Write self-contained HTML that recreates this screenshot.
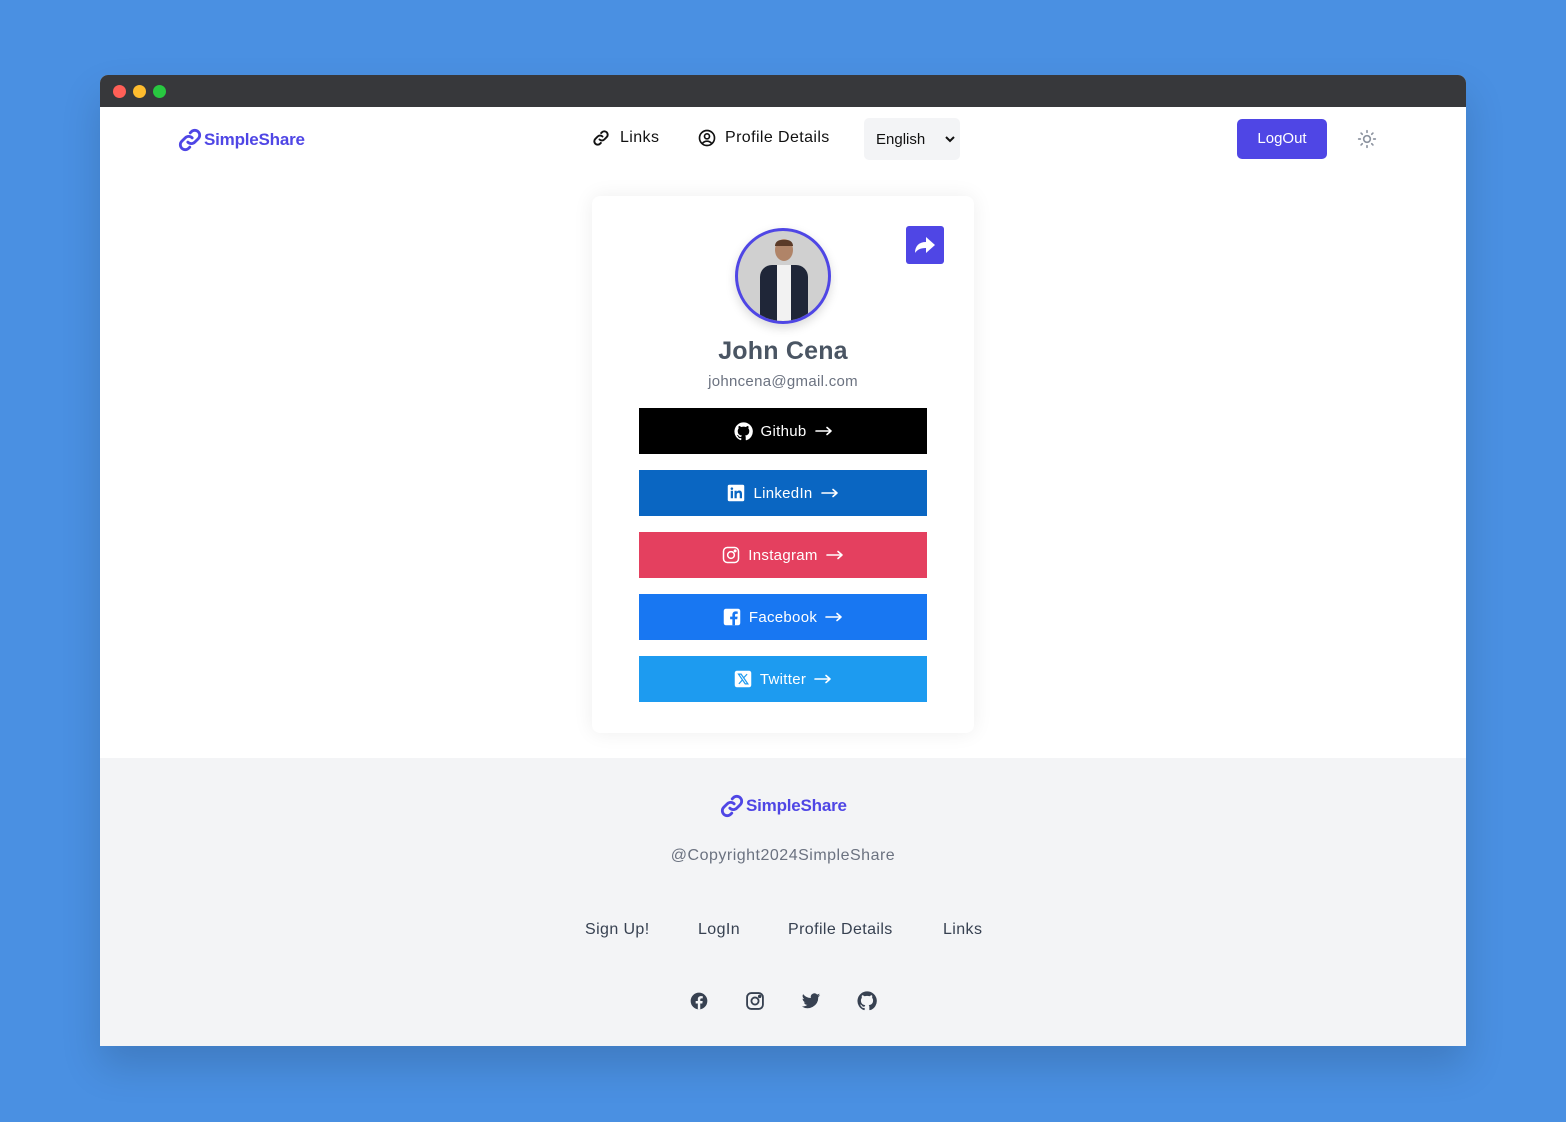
<!DOCTYPE html>
<html><head><meta charset="utf-8"><style>
*{box-sizing:border-box;margin:0;padding:0}
body{width:1566px;height:1122px;background:#4a90e2;font-family:"Liberation Sans",sans-serif;position:relative;overflow:hidden}
.win{position:absolute;left:100px;top:75px;width:1366px;height:971px;background:#fff;border-radius:8px 8px 0 0;overflow:hidden;box-shadow:0 20px 40px rgba(0,0,0,.15)}
.bar{height:32px;background:#37383b;position:relative}
.dot{position:absolute;top:10px;width:13px;height:13px;border-radius:50%}
.abs{position:absolute}
.logo{color:#4f46e5;font-weight:bold;font-size:17px;display:flex;align-items:center;gap:1px;letter-spacing:-.2px}
.nav{font-size:16px;color:#111;display:flex;align-items:center;gap:8px;letter-spacing:.4px}
.card{left:492px;top:121px;width:382px;height:537px;border-radius:8px;box-shadow:0 0 20px rgba(0,0,0,.07);background:#fff}
.btn{position:absolute;left:47px;width:288px;height:46px;color:#fff;font-size:15px;display:flex;align-items:center;justify-content:center;gap:8px;letter-spacing:.3px}
.foot{left:0;top:683px;width:1366px;height:288px;background:#f3f4f6}
.fl{font-size:16px;color:#374151;position:absolute;top:163px;letter-spacing:.4px}
</style></head><body>
<svg width="0" height="0" style="position:absolute"><defs>
<symbol id="ar" viewBox="0 0 18 10"><path d="M1 5h15M12 1.5L16 5l-4 3.5" stroke="#fff" stroke-width="1.6" fill="none" stroke-linecap="round" stroke-linejoin="round"/></symbol>
<symbol id="lk" viewBox="0 0 24 24"><path d="M10 14a4.5 4.5 0 0 0 6.4 0l3.2-3.2a4.5 4.5 0 0 0-6.4-6.4l-1 1" fill="none" stroke="currentColor" stroke-width="2.6" stroke-linecap="round"/><path d="M14 10a4.5 4.5 0 0 0-6.4 0l-3.2 3.2a4.5 4.5 0 0 0 6.4 6.4l1-1" fill="none" stroke="currentColor" stroke-width="2.6" stroke-linecap="round"/></symbol>
</defs></svg>
<div class="win">
 <div class="bar"><div class="dot" style="left:13px;background:#ff5f57"></div><div class="dot" style="left:33px;background:#febc2e"></div><div class="dot" style="left:53px;background:#28c840"></div></div>
 <div class="abs logo" style="left:77px;top:52px"><svg width="26" height="26" style="color:#4f46e5"><use href="#lk"/></svg>SimpleShare</div>
 <div class="abs nav" style="left:492px;top:54px"><svg width="18" height="18" style="color:#111"><use href="#lk"/></svg><span style="margin-left:2px">Links</span></div>
 <div class="abs nav" style="left:597px;top:53px"><svg width="20" height="20" viewBox="0 0 24 24" fill="none" stroke="#111" stroke-width="2"><circle cx="12" cy="12" r="9"/><circle cx="12" cy="10" r="3"/><path d="M6.5 18.5a7 7 0 0 1 11 0"/></svg>Profile Details</div>
 <div class="abs" style="left:764px;top:43px;width:96px;height:42px;background:#f3f4f6;border-radius:5px;font-size:15px;color:#111;padding:13px 0 0 12px">English<svg style="position:absolute;right:5px;top:17px" width="10" height="8" viewBox="0 0 10 8"><path d="M1 2l4 4 4-4" stroke="#111" stroke-width="2" fill="none"/></svg></div>
 <div class="abs" style="left:1137px;top:44px;width:90px;height:40px;background:#4f46e5;border-radius:5px;color:#fff;font-size:15px;text-align:center;line-height:40px">LogOut</div>
 <svg class="abs" style="left:1257px;top:54px" width="20" height="20" viewBox="0 0 24 24" fill="none" stroke="#8d94a0" stroke-width="2" stroke-linecap="round"><circle cx="12" cy="12" r="4"/><path d="M12 2v2M12 20v2M2 12h2M20 12h2M4.9 4.9l1.4 1.4M17.7 17.7l1.4 1.4M4.9 19.1l1.4-1.4M17.7 6.3l1.4-1.4"/></svg>
 <div class="abs card">
  <div class="abs" style="left:143px;top:32px;width:96px;height:96px;border-radius:50%;border:3px solid #4f46e5;background:#d0d0d0;overflow:hidden;box-shadow:0 4px 10px rgba(0,0,0,.15)">
   <div class="abs" style="left:37px;top:8px;width:18px;height:22px;border-radius:50%;background:#b08468"></div>
   <div class="abs" style="left:37px;top:9px;width:18px;height:6px;border-radius:8px 8px 0 0;background:#5a3a28"></div>
   <div class="abs" style="left:22px;top:34px;width:48px;height:60px;background:#1f2638;border-radius:12px 12px 0 0"></div>
   <div class="abs" style="left:39px;top:34px;width:14px;height:60px;background:#f2f2f2"></div>
  </div>
  <div class="abs" style="left:314px;top:30px;width:38px;height:38px;background:#4f46e5;border-radius:3px"><svg width="38" height="38" viewBox="0 0 38 38"><path d="M20 11l9 8-9 8v-5c-6 0-9 2-11 5 0-7 4-11 11-11z" fill="#fff"/></svg></div>
  <div class="abs" style="left:0;top:141px;width:382px;text-align:center;font-size:25px;color:#4a5563;font-weight:600;letter-spacing:.2px">John Cena</div>
  <div class="abs" style="left:0;top:177px;width:382px;text-align:center;font-size:15px;color:#6b7280;letter-spacing:.3px">johncena@gmail.com</div>
  <div class="btn" style="top:212px;background:#000"><svg width="19" height="19" viewBox="0 0 24 24" fill="#fff"><path d="M12 .5a11.5 11.5 0 0 0-3.6 22.4c.6.1.8-.3.8-.6v-2c-3.2.7-3.9-1.5-3.9-1.5-.5-1.3-1.3-1.7-1.3-1.7-1-.7.1-.7.1-.7 1.2.1 1.8 1.2 1.8 1.2 1 1.8 2.7 1.3 3.4 1 .1-.8.4-1.3.7-1.6-2.6-.3-5.3-1.3-5.3-5.7 0-1.3.5-2.3 1.2-3.1-.1-.3-.5-1.5.1-3.1 0 0 1-.3 3.2 1.2a11 11 0 0 1 5.8 0C17 4.8 18 5.1 18 5.1c.6 1.6.2 2.8.1 3.1.8.8 1.2 1.8 1.2 3.1 0 4.4-2.7 5.4-5.3 5.7.4.4.8 1.1.8 2.2v3.2c0 .3.2.7.8.6A11.5 11.5 0 0 0 12 .5z"/></svg>Github<svg width="18" height="10"><use href="#ar"/></svg></div>
  <div class="btn" style="top:274px;background:#0a66c2"><svg width="18" height="18" viewBox="0 0 24 24"><rect x="1" y="1" width="22" height="22" rx="2" fill="#fff"/><path d="M5 9h3v10H5zM6.5 4.5a1.7 1.7 0 1 1 0 3.4 1.7 1.7 0 0 1 0-3.4zM10 9h3v1.5c.5-1 1.6-1.8 3.2-1.8 3 0 3.8 2 3.8 4.6V19h-3v-5c0-1.3-.3-2.4-1.6-2.4S13 12.6 13 14v5h-3z" fill="#0a66c2"/></svg>LinkedIn<svg width="18" height="10"><use href="#ar"/></svg></div>
  <div class="btn" style="top:336px;background:#e4405f"><svg width="18" height="18" viewBox="0 0 24 24" fill="none" stroke="#fff" stroke-width="2"><rect x="2" y="2" width="20" height="20" rx="5"/><circle cx="12" cy="12" r="4.5"/><circle cx="17.5" cy="6.5" r="1" fill="#fff"/></svg>Instagram<svg width="18" height="10"><use href="#ar"/></svg></div>
  <div class="btn" style="top:398px;background:#1877f2"><svg width="18" height="18" viewBox="0 0 24 24"><rect x="1" y="1" width="22" height="22" rx="3" fill="#fff"/><path d="M16 23v-8h3l.5-3.5H16V9.5c0-1 .3-1.7 1.8-1.7h1.8V4.7c-.3 0-1.4-.2-2.7-.2-2.7 0-4.4 1.6-4.4 4.6v2.4H9.5V15h3v8z" fill="#1877f2"/></svg>Facebook<svg width="18" height="10"><use href="#ar"/></svg></div>
  <div class="btn" style="top:460px;background:#1d9bf0"><svg width="18" height="18" viewBox="0 0 24 24"><rect x="1" y="1" width="22" height="22" rx="3" fill="#fff"/><path d="M6 5.5h3.5l9 13H15zM6.5 18.5l5-5.6M12.8 10.5l4.7-5" stroke="#1d9bf0" stroke-width="1.6" fill="none"/></svg>Twitter<svg width="18" height="10"><use href="#ar"/></svg></div>
 </div>
 <div class="abs foot">
  <div class="abs logo" style="left:619px;top:35px"><svg width="26" height="26" style="color:#4f46e5"><use href="#lk"/></svg>SimpleShare</div>
  <div class="abs" style="left:0;top:89px;width:1366px;text-align:center;font-size:16px;color:#6b7280;letter-spacing:.5px">@Copyright2024SimpleShare</div>
  <div class="fl" style="left:485px">Sign Up!</div>
  <div class="fl" style="left:598px">LogIn</div>
  <div class="fl" style="left:688px">Profile Details</div>
  <div class="fl" style="left:843px">Links</div>
  <svg class="abs" style="left:589px;top:233px" width="20" height="20" viewBox="0 0 24 24"><circle cx="12" cy="12" r="10" fill="#374151"/><path d="M13.5 22v-7h2.5l.4-3h-2.9v-1.8c0-.8.3-1.4 1.5-1.4h1.5V6.2c-.3 0-1.2-.1-2.2-.1-2.2 0-3.7 1.3-3.7 3.8V12H8v3h2.6v7z" fill="#f3f4f6"/></svg>
  <svg class="abs" style="left:645px;top:233px" width="20" height="20" viewBox="0 0 24 24" fill="none" stroke="#374151" stroke-width="2.2"><rect x="2.5" y="2.5" width="19" height="19" rx="5"/><circle cx="12" cy="12" r="4.3"/><circle cx="17.6" cy="6.4" r="1" fill="#374151"/></svg>
  <svg class="abs" style="left:701px;top:233px" width="20" height="20" viewBox="0 0 24 24" fill="#374151"><path d="M23 5c-.8.4-1.7.6-2.6.7a4.5 4.5 0 0 0 2-2.5c-.9.5-1.9.9-2.9 1.1A4.5 4.5 0 0 0 11.8 8.4 12.8 12.8 0 0 1 2.5 3.7a4.5 4.5 0 0 0 1.4 6c-.7 0-1.4-.2-2-.6 0 2.2 1.6 4 3.6 4.4-.7.2-1.4.2-2 .1a4.5 4.5 0 0 0 4.2 3.1A9 9 0 0 1 1 18.6 12.8 12.8 0 0 0 20.7 7.8V7.2c.9-.6 1.7-1.4 2.3-2.2z"/></svg>
  <svg class="abs" style="left:757px;top:233px" width="20" height="20" viewBox="0 0 24 24" fill="#374151"><path d="M12 .5a11.5 11.5 0 0 0-3.6 22.4c.6.1.8-.3.8-.6v-2c-3.2.7-3.9-1.5-3.9-1.5-.5-1.3-1.3-1.7-1.3-1.7-1-.7.1-.7.1-.7 1.2.1 1.8 1.2 1.8 1.2 1 1.8 2.7 1.3 3.4 1 .1-.8.4-1.3.7-1.6-2.6-.3-5.3-1.3-5.3-5.7 0-1.3.5-2.3 1.2-3.1-.1-.3-.5-1.5.1-3.1 0 0 1-.3 3.2 1.2a11 11 0 0 1 5.8 0C17 4.8 18 5.1 18 5.1c.6 1.6.2 2.8.1 3.1.8.8 1.2 1.8 1.2 3.1 0 4.4-2.7 5.4-5.3 5.7.4.4.8 1.1.8 2.2v3.2c0 .3.2.7.8.6A11.5 11.5 0 0 0 12 .5z"/></svg>
 </div>
</div>
</body></html>
